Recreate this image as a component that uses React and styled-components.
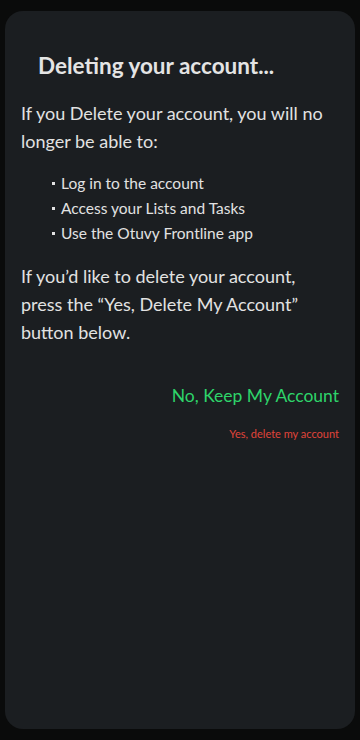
import styled, { createGlobalStyle } from "styled-components";

const GlobalStyle = createGlobalStyle`
  html, body {
    margin: 0;
    padding: 0;
    background: #0a0b0b;
  }
  body {
    font-family: Lato, "Noto Sans", sans-serif;
  }
`;

const Screen = styled.div`
  height: 740px;
  box-sizing: border-box;
  padding: 11px 5px 11px 5px;
  display: flex;
`;

const Card = styled.div`
  flex: 1;
  background: #1b1e21;
  border-radius: 18px;
  padding: 40px 16px 0 16px;
  color: #e2e2e2;
`;

const Title = styled.h1`
  margin: 0 0 18px 17px;
  font-size: 22.5px;
  font-weight: 700;
  line-height: 30px;
  color: #e4e4e4;
`;

const Paragraph = styled.p`
  margin: 0;
  font-size: 18px;
  line-height: 28px;
`;

const List = styled.ul`
  list-style: none;
  margin: 16px 0 16px 0;
  padding: 0 0 0 31px;
`;

const Item = styled.li`
  font-size: 15.5px;
  line-height: 25px;
  display: flex;
  align-items: center;

  &::before {
    content: "";
    width: 3px;
    height: 3px;
    background: #e2e2e2;
    margin-right: 6px;
  }
`;

const Actions = styled.div`
  display: flex;
  flex-direction: column;
  align-items: flex-end;
  margin-top: 38px;
`;

const ActionButton = styled.button`
  background: none;
  border: none;
  padding: 0;
  font-family: inherit;
  cursor: pointer;
  color: ${(p) => (p.$danger ? "#e0443a" : "#2ed46a")};
  font-size: ${(p) => (p.$danger ? "11px" : "17.5px")};
  line-height: ${(p) => (p.$danger ? "14px" : "24px")};
  margin-bottom: ${(p) => (p.$danger ? "0" : "19px")};
`;

const bullets = [
  "Log in to the account",
  "Access your Lists and Tasks",
  "Use the Otuvy Frontline app",
];

export default function App() {
  return (
    <Screen>
      <GlobalStyle />
      <Card>
        <Title>Deleting your account...</Title>
        <Paragraph>
          If you Delete your account, you will no longer be able to:
        </Paragraph>
        <List>
          {bullets.map((b) => (
            <Item key={b}>{b}</Item>
          ))}
        </List>
        <Paragraph>
          If you’d like to delete your account, press the “Yes, Delete My
          Account” button below.
        </Paragraph>
        <Actions>
          <ActionButton>No, Keep My Account</ActionButton>
          <ActionButton $danger>Yes, delete my account</ActionButton>
        </Actions>
      </Card>
    </Screen>
  );
}
